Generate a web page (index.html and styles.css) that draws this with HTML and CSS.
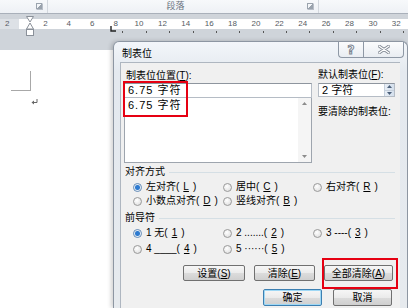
FILE: index.html
```html
<!DOCTYPE html>
<html lang="zh-CN">
<head>
  <meta charset="UTF-8" />
  <title>制表位</title>
  <link rel="stylesheet" href="styles.css">
</head>
<body>

  <div class="ribbon">
    <div class="group g1"><span class="launcher"></span></div>
    <div class="group g2"><span class="glabel">段落</span><span class="launcher"></span></div>
    <div class="group g3"></div>
  </div>

  <div class="rulerbar">
    <div class="ruler">
      <div class="rmargin">2</div>
      <div class="rbody">
        <span>2</span><span>4</span><span>6</span><span>8</span><span>10</span><span>12</span>
        <span>14</span><span>16</span><span>18</span><span>20</span><span>22</span><span>24</span>
        <span>26</span><span>28</span><span>30</span><span>32</span>
      </div>
    </div>
    <div class="ticks">
      <span></span><span></span><span></span><span class="t"></span><span class="t"></span><span class="t"></span>
      <span class="t"></span><span class="t"></span><span class="t"></span><span class="t"></span><span class="t"></span><span class="t"></span>
      <span class="t"></span><span class="t"></span><span class="t"></span><span class="t"></span>
    </div>
    <svg class="indent" width="10" height="21" viewBox="0 0 10 21">
      <path d="M1.5 0.5 H8.5 L5 6 Z" fill="#fff" stroke="#8a9099"/>
      <path d="M5 7 L8.5 13 H1.5 Z" fill="#fff" stroke="#8a9099"/>
      <rect x="1.5" y="13.5" width="7" height="6" fill="#fff" stroke="#8a9099"/>
    </svg>
    <svg class="tabmark" width="6" height="6" viewBox="0 0 6 6">
      <path d="M1 0 V5 H6" fill="none" stroke="#222" stroke-width="1.4"/>
    </svg>
  </div>

  <div class="doc">
    <div class="corner"></div>
    <svg class="para" width="7" height="6" viewBox="0 0 7 6">
      <path d="M6 0 V3.5 H1.5" fill="none" stroke="#666" stroke-width="1"/>
      <path d="M0.5 3.5 L3 1.5 V5.5 Z" fill="#666"/>
    </svg>
  </div>

  <div class="dialog">
    <div class="titlebar">
      <span class="title">制表位</span>
      <div class="tbtns">
        <span class="tbtn help">?</span>
        <span class="tbtn close">
          <svg width="12" height="9" viewBox="0 0 12 9">
            <path d="M1 1 L11 8 M11 1 L1 8" stroke="#7d8590" stroke-width="3" stroke-linecap="round"/>
            <path d="M1 1 L11 8 M11 1 L1 8" stroke="#fff" stroke-width="1.4" stroke-linecap="round"/>
          </svg>
        </span>
      </div>
    </div>

    <div class="content">
      <div class="top">
        <div class="leftcol">
          <div class="lbl">制表位位置(<u>T</u>):</div>
          <div class="field">6.75 字符</div>
          <div class="list">
            <div class="items"><div class="item">6.75 字符</div></div>
            <div class="scroll">
              <svg width="5" height="3" viewBox="0 0 5 3"><path d="M0 3 L2.5 0 L5 3 Z" fill="#8c8c8c"/></svg>
              <svg width="5" height="3" viewBox="0 0 5 3"><path d="M0 0 L2.5 3 L5 0 Z" fill="#8c8c8c"/></svg>
            </div>
          </div>
        </div>
        <div class="rightcol">
          <div class="lbl">默认制表位(<u>F</u>):</div>
          <div class="spin">
            <span class="spintext">2 字符</span>
            <span class="arrows">
              <i><svg width="5" height="3" viewBox="0 0 5 3"><path d="M0 3 L2.5 0 L5 3 Z" fill="#4c607a"/></svg></i>
              <i><svg width="5" height="3" viewBox="0 0 5 3"><path d="M0 0 L2.5 3 L5 0 Z" fill="#4c607a"/></svg></i>
            </span>
          </div>
          <div class="lbl clear">要清除的制表位:</div>
        </div>
      </div>

      <div class="sect"><span>对齐方式</span></div>
      <div class="radios">
        <label class="radio on"><b></b>左对齐(<u>L</u>)</label>
        <label class="radio"><b></b>居中(<u>C</u>)</label>
        <label class="radio"><b></b>右对齐(<u>R</u>)</label>
        <label class="radio"><b></b>小数点对齐(<u>D</u>)</label>
        <label class="radio"><b></b>竖线对齐(<u>B</u>)</label>
      </div>

      <div class="sect lead"><span>前导符</span></div>
      <div class="radios leaders">
        <label class="radio on"><b></b>1 无(<u>1</u>)</label>
        <label class="radio"><b></b>2 .......(<u>2</u>)</label>
        <label class="radio"><b></b>3 ----(<u>3</u>)</label>
        <label class="radio"><b></b>4 ____(<u>4</u>)</label>
        <label class="radio"><b></b>5 ······(<u>5</u>)</label>
      </div>

      <div class="btnrow">
        <button class="btn set">设置(<u>S</u>)</button>
        <button class="btn del">清除(<u>E</u>)</button>
        <button class="btn all">全部清除(<u>A</u>)</button>
      </div>
      <div class="btnrow bottom">
        <button class="btn ok">确定</button>
        <button class="btn cancel">取消</button>
      </div>

      <div class="redbox r1"></div>
      <div class="redbox r2"></div>
    </div>
  </div>

</body>
</html>
```

FILE: styles.css
```css
body {
  margin: 0;
  width: 408px;
  height: 308px;
  overflow: hidden;
  position: relative;
  background: #fff;
  font-family: "Liberation Sans", "Noto Sans CJK SC", sans-serif;
  font-size: 10px;
  color: #000;
}

/* ribbon strip */
.ribbon {
  height: 13px;
  display: flex;
  background: linear-gradient(#f7f9fb, #eef1f5);
  border-bottom: 1px solid #a9b0ba;
}
.group {
  display: flex;
  align-items: center;
  justify-content: flex-end;
  border-right: 1px solid #d3d8de;
}
.g1 { width: 47px; }
.g2 { width: 270px; }
.g3 { flex: 1; border-right: none; }
.glabel {
  flex: 1;
  text-align: center;
  margin-right: 4px;
  color: #6a7380;
  font-size: 9px;
  line-height: 11px;
}
.launcher {
  width: 5px;
  height: 5px;
  margin-right: 4px;
  border: 1px solid #b8bec7;
  border-left-color: transparent;
  border-top-color: transparent;
  background: linear-gradient(135deg, transparent 50%, #9aa3ad 50%);
}

/* ruler */
.rulerbar {
  position: relative;
  height: 36px;
  box-sizing: border-box;
  padding-top: 5px;
  background: #cfd4da;
}
.ruler {
  height: 10px;
  display: flex;
  font-size: 8px;
  line-height: 10px;
  color: #555b63;
}
.rmargin {
  width: 26px;
  box-sizing: border-box;
  padding-left: 5px;
  background: #dde1e6;
}
.rbody {
  flex: 1;
  display: flex;
  background: #fff;
  padding-left: 15px;
}
.rbody span,
.ticks span {
  flex: 0 0 23.4px;
  text-align: center;
}
.ticks {
  display: flex;
  height: 3px;
  margin-top: 2px;
  padding-left: 41px;
}
.ticks .t {
  display: flex;
  justify-content: center;
}
.ticks .t::before {
  content: "";
  width: 1px;
  height: 2px;
  background: #555;
}
.indent {
  position: absolute;
  left: 25px;
  top: 2px;
}
.tabmark {
  position: absolute;
  left: 110px;
  top: 12px;
}

/* document */
.doc {
  height: 258px;
  box-sizing: border-box;
  background: #fff;
  padding-top: 1px;
}
.corner {
  width: 19px;
  height: 19px;
  margin: 20px 0 0 11px;
  border-right: 1px solid #a8a8a8;
  border-bottom: 1px solid #a8a8a8;
}
.para {
  display: block;
  margin: 8px 0 0 31px;
}

/* dialog window */
.dialog {
  position: absolute;
  left: 113px;
  top: 41px;
  width: 293px;
  height: 266px;
  border: 1px solid #8d96a2;
  border-bottom: none;
  border-radius: 6px 6px 0 0;
  background: linear-gradient(#f3f6fa, #e4e9ef 30px, #e6eaee);
  box-shadow: -2px 0 4px rgba(0, 0, 0, 0.18);
}
.titlebar {
  height: 20px;
  display: flex;
  align-items: flex-start;
  justify-content: space-between;
}
.title {
  margin: 5px 0 0 8px;
  line-height: 14px;
}
.tbtns {
  display: flex;
  margin-right: 3px;
}
.tbtn {
  height: 15px;
  display: flex;
  align-items: center;
  justify-content: center;
  border: 1px solid #8e98a5;
  border-top: none;
  background: linear-gradient(#fbfcfd, #e9edf2);
}
.help {
  width: 24px;
  border-radius: 0 0 0 4px;
  border-right: none;
  font-family: "DejaVu Sans", sans-serif;
  font-weight: bold;
  font-size: 12px;
  color: #fff;
  -webkit-text-stroke: 1px #7d8590;
}
.close {
  width: 39px;
  border-radius: 0 0 4px 0;
}

.content {
  position: relative;
  margin: 0 7px 0 6px;
  height: 246px;
  box-sizing: border-box;
  border-top: 1px solid #aeb6c0;
  border-left: 1px solid #aeb6c0;
  background: #f0f0f0;
  padding: 7px 0 0 3px;
}
.top {
  display: flex;
  gap: 6px;
}
.lbl {
  line-height: 12px;
  padding-left: 2px;
}
.leftcol {
  width: 188px;
}
.field {
  height: 15px;
  margin-top: 1px;
  box-sizing: border-box;
  border: 1px solid #b5bcc5;
  border-top-color: #8e959e;
  background: #fff;
  padding-left: 3px;
  font-size: 11px;
  line-height: 13px;
  letter-spacing: 1px;
}
.list {
  height: 65px;
  box-sizing: border-box;
  display: flex;
  border: 1px solid #9ea5ae;
  border-top: none;
  background: #fff;
}
.items {
  flex: 1;
  padding-left: 3px;
  font-size: 11px;
  letter-spacing: 1px;
  line-height: 15px;
}
.scroll {
  width: 13px;
  box-sizing: border-box;
  padding: 4px 0;
  display: flex;
  flex-direction: column;
  justify-content: space-between;
  align-items: center;
  background: #f5f5f5;
}
.rightcol {
  width: 77px;
}
.rightcol .lbl {
  padding-left: 0;
  margin-top: -1px;
}
.spin {
  height: 14px;
  margin-top: 2px;
  box-sizing: border-box;
  display: flex;
  border: 1px solid #b5bcc5;
  border-top-color: #8e959e;
  background: #fff;
}
.spintext {
  flex: 1;
  padding-left: 3px;
  font-size: 11px;
  line-height: 12px;
}
.arrows {
  width: 9px;
  display: flex;
  flex-direction: column;
  background: linear-gradient(90deg, #e8eef6, #d4dfec);
  border-left: 1px solid #c6d0dc;
}
.arrows i {
  flex: 1;
  display: flex;
  align-items: center;
  justify-content: center;
}
.arrows i + i {
  border-top: 1px solid #c6d0dc;
}
.rightcol .clear {
  margin-top: 9px;
}

/* group headings */
.sect {
  display: flex;
  align-items: center;
  gap: 4px;
  margin-top: 3px;
  padding-left: 1px;
  line-height: 12px;
  width: 270px;
}
.sect::after {
  content: "";
  flex: 1;
  height: 1px;
  background: #d5dfe5;
}
.sect.lead {
  margin-top: 5px;
}

/* radios */
.radios {
  display: grid;
  grid-template-columns: 90px 90px 90px;
  row-gap: 2px;
  padding-left: 9px;
  margin-top: 3px;
}
.leaders {
  row-gap: 4px;
  margin-top: 3px;
}
.radio {
  display: flex;
  align-items: center;
  gap: 4px;
  line-height: 12px;
}
.radio b {
  width: 7px;
  height: 7px;
  border: 1px solid #9a9a9a;
  border-radius: 50%;
  background: radial-gradient(circle at 40% 35%, #fff, #d9d9d9);
}
.radio.on b {
  background: radial-gradient(circle, #2d7ad0 0 2px, #8fb6df 2.6px, #fff 3.2px);
  border-color: #5f88b5;
}

/* buttons */
.btnrow {
  display: flex;
  gap: 9px;
  padding-left: 59px;
  margin-top: 10px;
}
.btn {
  height: 16px;
  padding: 0;
  border: 1px solid #707070;
  border-radius: 2px;
  background: linear-gradient(#f6f6f6, #ebebeb 50%, #dcdcdc 51%, #cfcfcf);
  font-family: "Liberation Sans", "Noto Sans CJK SC", sans-serif;
  font-size: 10px;
  line-height: 13px;
  color: #000;
}
.set { width: 62px; }
.del { width: 61px; }
.all { width: 69px; }
.bottom {
  padding-left: 139px;
  margin-top: 8px;
  gap: 11px;
}
.ok {
  width: 59px;
  height: 17px;
  border-color: #3c7fb1;
  box-shadow: inset 0 0 0 1px #9fd8f5;
}
.cancel {
  width: 59px;
  height: 17px;
}

.redbox {
  position: absolute;
  border: 2px solid #e60012;
  box-sizing: border-box;
}
.r1 {
  left: 2px;
  top: 18px;
  width: 65px;
  height: 36px;
}
.r2 {
  left: 201px;
  top: 195px;
  width: 76px;
  height: 31px;
}
```
